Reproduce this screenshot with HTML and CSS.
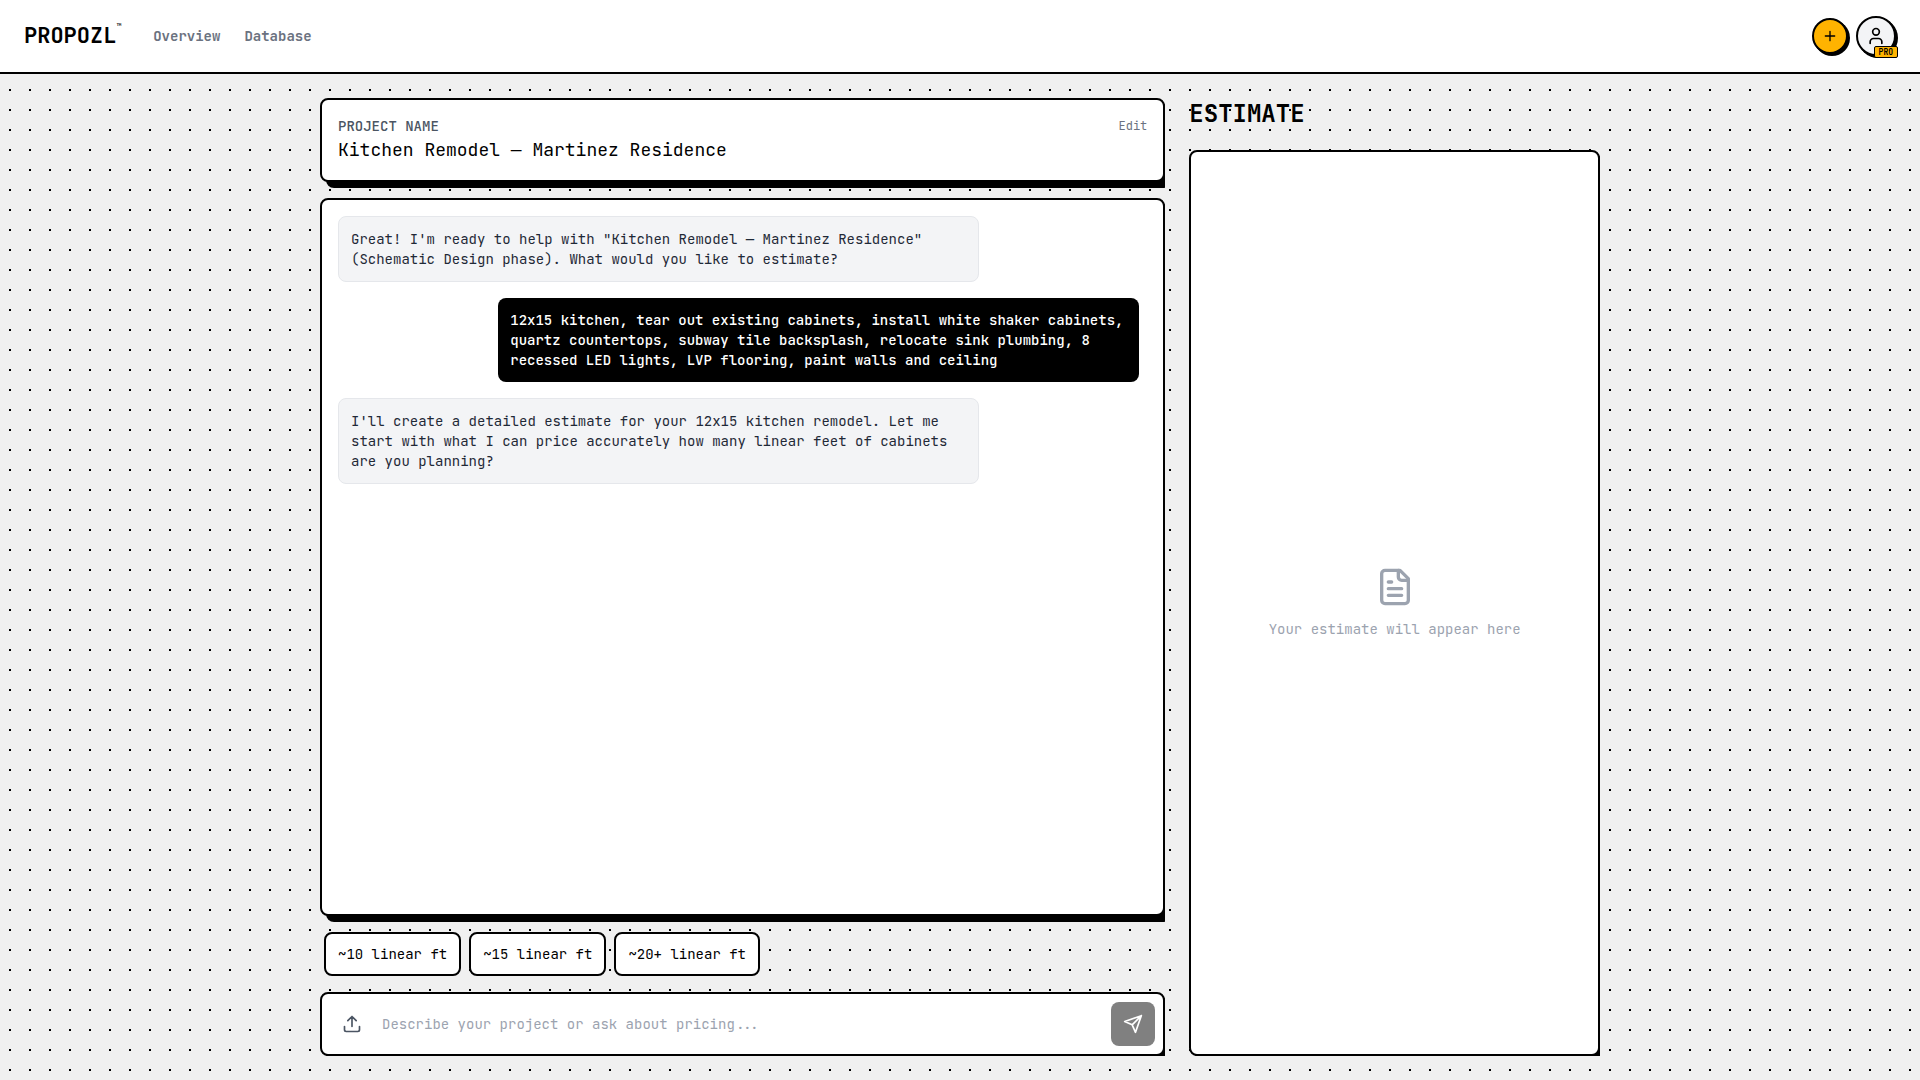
FILE: index.html
```html
<!DOCTYPE html>
<html lang="en">
<head>
  <meta charset="UTF-8">
  <meta name="viewport" content="width=device-width, initial-scale=1.0">
  <title>Propozl</title>
  <link rel="stylesheet" href="styles.css">
</head>
<body>
  <header class="header">
    <a href="#" class="logo">PROPOZL<sup>™</sup></a>
    <nav class="nav">
      <a href="#">Overview</a>
      <a href="#">Database</a>
    </nav>
    <div class="header-actions">
      <button class="add-button" aria-label="New project">
        <svg width="16" height="16" viewBox="0 0 24 24"><path d="M5 12h14M12 5v14"/></svg>
      </button>
      <button class="avatar-button" aria-label="Account">
        <svg width="20" height="20" viewBox="0 0 24 24"><path d="M19 21v-2a4 4 0 0 0-4-4H9a4 4 0 0 0-4 4v2"/><circle cx="12" cy="7" r="4"/></svg>
        <span class="pro-badge">PRO</span>
      </button>
    </div>
  </header>

  <main class="main">
    <section class="chat-column">
      <div class="card project-card">
        <div class="project-row">
          <span class="project-label">PROJECT NAME</span>
          <button class="edit-button">Edit</button>
        </div>
        <h1 class="project-name">Kitchen Remodel — Martinez Residence</h1>
      </div>

      <div class="card chat-card">
        <div class="messages">
          <p class="message">Great! I'm ready to help with "Kitchen Remodel — Martinez Residence" (Schematic Design phase). What would you like to estimate?</p>
          <p class="message message-user">12x15 kitchen, tear out existing cabinets, install white shaker cabinets, quartz countertops, subway tile backsplash, relocate sink plumbing, 8 recessed LED lights, LVP flooring, paint walls and ceiling</p>
          <p class="message">I'll create a detailed estimate for your 12x15 kitchen remodel. Let me start with what I can price accurately how many linear feet of cabinets are you planning?</p>
        </div>
      </div>

      <div class="suggestions">
        <button>~10 linear ft</button>
        <button>~15 linear ft</button>
        <button>~20+ linear ft</button>
      </div>

      <form class="card composer">
        <button type="button" class="upload-button" aria-label="Upload file">
          <svg width="20" height="20" viewBox="0 0 24 24"><path d="M21 15v4a2 2 0 0 1-2 2H5a2 2 0 0 1-2-2v-4M17 8l-5-5-5 5M12 3v12"/></svg>
        </button>
        <input type="text" aria-label="Message" placeholder="Describe your project or ask about pricing...">
        <button type="button" class="send-button" aria-label="Send">
          <svg width="20" height="20" viewBox="0 0 24 24"><path d="M22 2L15 22l-4-9-9-4zM22 2L11 13"/></svg>
        </button>
      </form>
    </section>

    <section class="estimate-column">
      <h2 class="estimate-title">ESTIMATE</h2>
      <div class="card estimate-card">
        <svg width="40" height="40" viewBox="0 0 24 24"><path d="M15 2H6a2 2 0 0 0-2 2v16a2 2 0 0 0 2 2h12a2 2 0 0 0 2-2V7z"/><path d="M14 2v4a2 2 0 0 0 2 2h4M10 9H8M16 13H8M16 17H8"/></svg>
        <p>Your estimate will appear here</p>
      </div>
    </section>
  </main>
</body>
</html>
```

FILE: styles.css
```css
* {
  box-sizing: border-box;
}

body {
  margin: 0;
  height: 100vh;
  display: flex;
  flex-direction: column;
  font-family: "JetBrains Mono", "DejaVu Sans Mono", monospace;
  font-size: 14px;
  line-height: 20px;
  color: #000;
  background-color: #f0f0f0;
  background-image: radial-gradient(circle, #000 1px, transparent 1px);
  background-size: 20px 20px;
}

h1,
h2,
p {
  margin: 0;
}

button,
input {
  font: inherit;
  color: inherit;
}

button {
  padding: 0;
  border: none;
  background: none;
  cursor: pointer;
}

svg {
  display: block;
  fill: none;
  stroke: currentColor;
  stroke-width: 2;
  stroke-linecap: round;
  stroke-linejoin: round;
}

.header {
  display: flex;
  align-items: center;
  height: 74px;
  padding: 0 24px;
  background: #fff;
  border-bottom: 2px solid #000;
}

.logo {
  display: flex;
  font-size: 22px;
  line-height: 32px;
  font-weight: bold;
  color: #000;
  text-decoration: none;
}

.logo sup {
  font-size: 8px;
  line-height: 12px;
}

.nav {
  display: flex;
  gap: 24px;
  margin-left: 32px;
}

.nav a {
  font-weight: bold;
  color: #6b7280;
  text-decoration: none;
}

.header-actions {
  display: flex;
  align-items: center;
  gap: 8px;
  margin-left: auto;
}

.add-button,
.avatar-button {
  display: flex;
  align-items: center;
  justify-content: center;
  border: 2px solid #000;
  border-radius: 50%;
  box-shadow: 2px 2px 0 #000;
}

.add-button {
  width: 36px;
  height: 36px;
  background: #ffb300;
}

.avatar-button {
  position: relative;
  width: 40px;
  height: 40px;
  background: #f3f4f6;
}

.pro-badge {
  position: absolute;
  right: -4px;
  bottom: -4px;
  padding: 0 4px;
  border: 1px solid #000;
  border-radius: 2px;
  background: #ffb300;
  font-size: 8px;
  line-height: 10px;
  font-weight: bold;
}

.main {
  flex: 1;
  min-height: 0;
  display: grid;
  grid-template-columns: repeat(12, 1fr);
  gap: 24px;
  width: 100%;
  max-width: 1328px;
  margin: 0 auto;
  padding: 24px;
}

.card {
  background: #fff;
  border: 2px solid #000;
  border-radius: 8px;
  box-shadow: 6px 6px 0 #000;
}

.chat-column {
  grid-column: span 8;
  display: flex;
  flex-direction: column;
  gap: 16px;
  min-height: 0;
  overflow: hidden;
}

.project-card {
  padding: 16px;
}

.project-row {
  display: flex;
  align-items: center;
  justify-content: space-between;
}

.project-label {
  font-weight: 500;
  color: #4b5563;
}

.edit-button {
  font-size: 12px;
  color: #6b7280;
}

.project-name {
  font-size: 18px;
  line-height: 28px;
  font-weight: normal;
}

.chat-card {
  flex: 1;
  min-height: 0;
  padding: 16px;
}

.messages {
  display: flex;
  flex-direction: column;
  gap: 16px;
  height: 100%;
  padding-right: 8px;
  overflow-y: auto;
}

.message {
  width: 80%;
  padding: 12px;
  border: 1px solid #e5e7eb;
  border-radius: 8px;
  background: #f3f4f6;
  color: #1f2937;
}

.message-user {
  align-self: flex-end;
  border: none;
  background: #000;
  color: #fff;
  font-weight: 500;
}

.suggestions {
  display: flex;
  gap: 8px;
  padding: 0 4px;
}

.suggestions button {
  padding: 10px 12px;
  border: 2px solid #000;
  border-radius: 8px;
  background: #fff;
}

.composer {
  display: flex;
  align-items: center;
  gap: 8px;
  padding: 8px;
}

.composer input {
  flex: 1;
  min-width: 0;
  padding: 0;
  border: none;
  outline: none;
  background: none;
}

.composer input::placeholder {
  color: #9ca3af;
}

.upload-button,
.send-button {
  display: flex;
  align-items: center;
  justify-content: center;
  width: 44px;
  height: 44px;
  border-radius: 8px;
  color: #4b5563;
}

.send-button {
  background: #808080;
  color: #fff;
}

.estimate-column {
  grid-column: span 4;
  display: flex;
  flex-direction: column;
  gap: 20px;
  min-height: 0;
  overflow: hidden;
}

.estimate-title {
  font-size: 24px;
  line-height: 32px;
}

.estimate-card {
  flex: 1;
  display: flex;
  flex-direction: column;
  align-items: center;
  justify-content: center;
  gap: 12px;
  color: #9ca3af;
}
```
